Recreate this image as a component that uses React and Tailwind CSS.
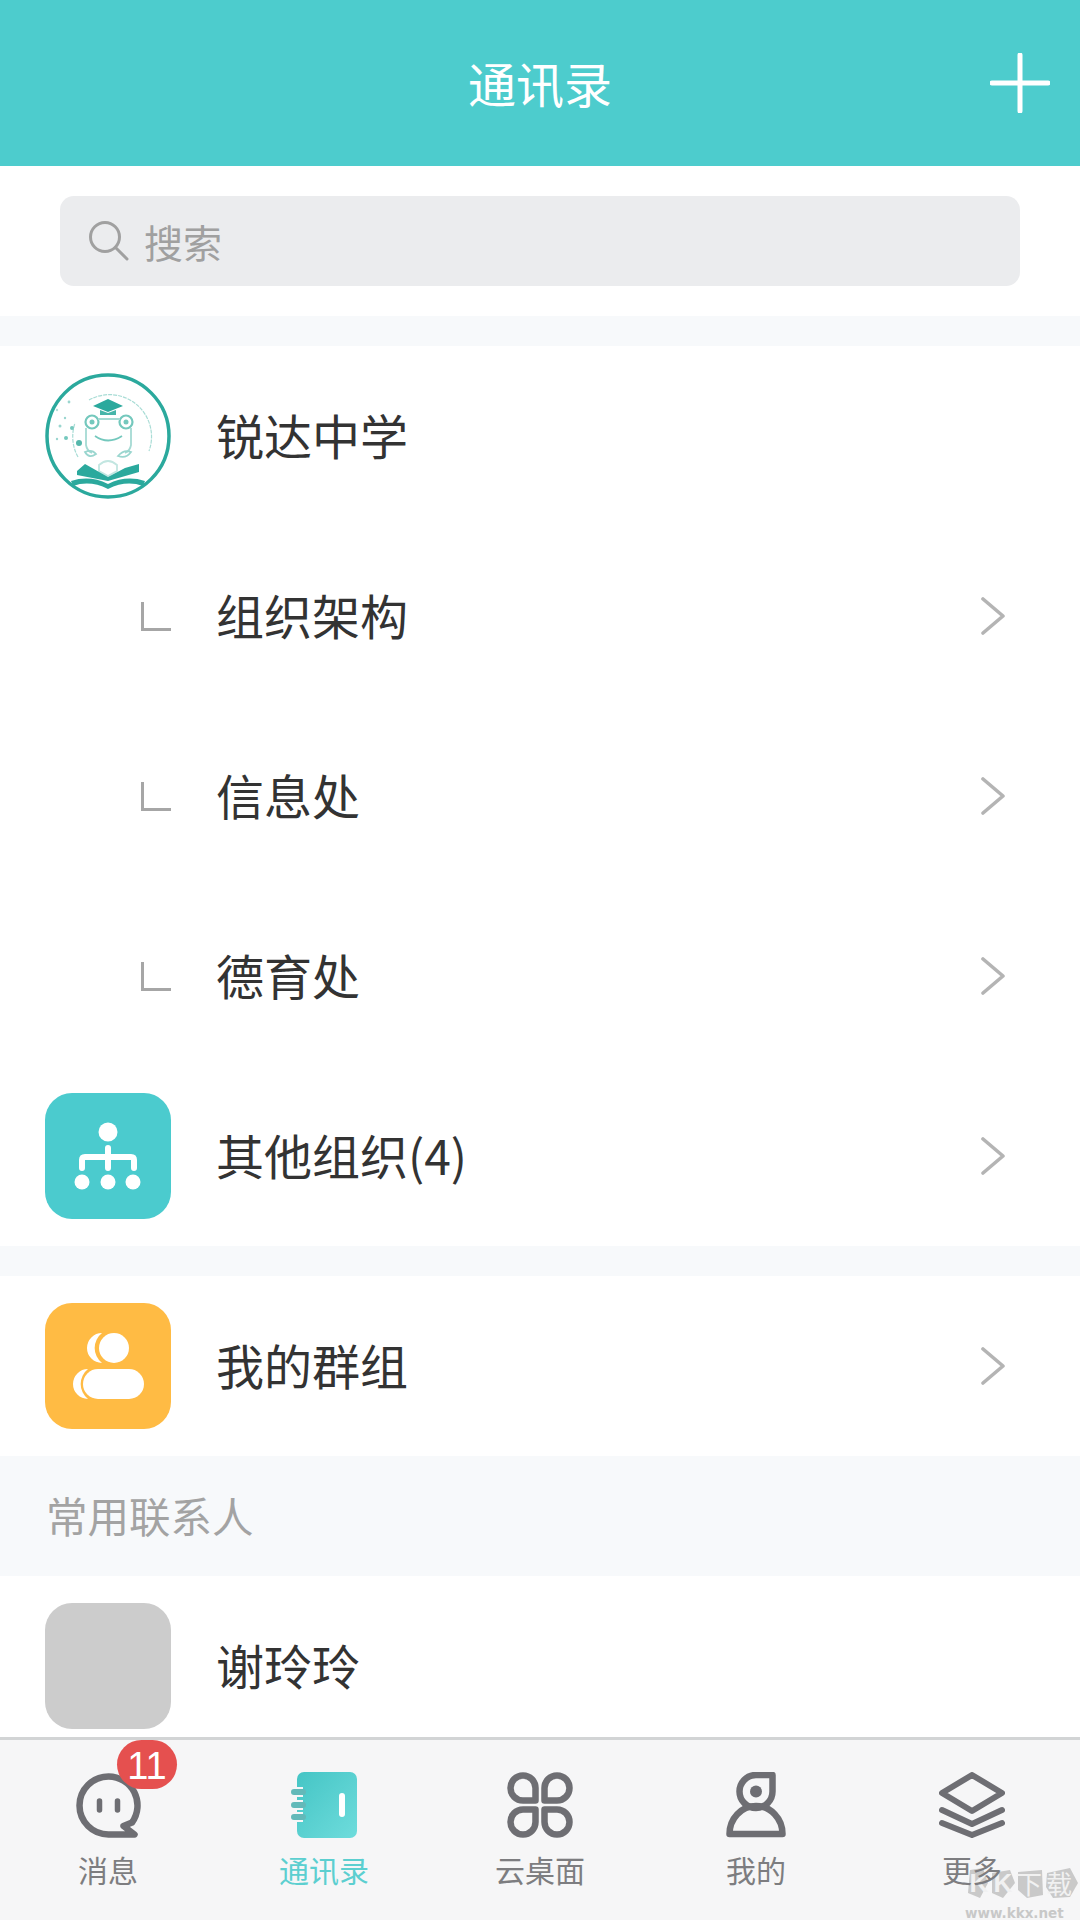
const CJK = 'font-["Noto_Sans_CJK_SC","Noto_Sans",sans-serif]'

const SchoolLogo = () => (
  <svg viewBox="0 0 126 126" className="h-[126px] w-[126px]" fill="none">
    <circle cx="63" cy="63" r="61" stroke="#2ba99d" strokeWidth="3.5" />
    <path d="M33 84A42 42 0 0 1 30 50M44 27A42 42 0 0 1 104 78" stroke="#a8dcd5" strokeWidth="1.2" strokeDasharray="4 1" />
    {/* mortar board */}
    <path d="M48 33L63 26L78 33L63 39Z" fill="#2ba99d" />
    <path d="M55 37V42H71V37L63 40Z" fill="#46b5a9" />
    {/* frog */}
    <circle cx="47" cy="49" r="6.5" stroke="#74c8bd" strokeWidth="2.2" />
    <circle cx="81" cy="49" r="6.5" stroke="#74c8bd" strokeWidth="2.2" />
    <circle cx="47" cy="49" r="2.5" fill="#74c8bd" />
    <circle cx="81" cy="49" r="2.5" fill="#74c8bd" />
    <path d="M53 46H75M41 55V72Q42 78 47 80M86 55V72Q85 78 80 80" stroke="#a5dad3" strokeWidth="1.8" />
    <path d="M50 63Q63 72 77 63" stroke="#74c8bd" strokeWidth="1.8" />
    <path d="M40 79Q47 76 51 81Q44 86 40 79ZM86 79Q79 76 73 83Q81 86 86 79Z" stroke="#9ad6cf" strokeWidth="1.8" />
    <path d="M54 92Q63 84 72 92V98L63 103L54 98Z" stroke="#c2e6e1" strokeWidth="1.8" />
    {/* open book */}
    <path d="M32 98L40 91L63 104L80 95L94 91L94 99L63 108L32 102Z" fill="#2ba99d" />
    <path d="M26 108Q45 102 63 111Q81 102 100 108L98 113Q81 107 63 116Q45 107 28 113Z" fill="#2ba99d" />
    {/* stars */}
    <circle cx="24" cy="29" r="1.4" fill="#9ad6cf" />
    <circle cx="12" cy="37" r="1.2" fill="#b5e0da" />
    <circle cx="20" cy="45" r="1.2" fill="#9ad6cf" />
    <circle cx="15" cy="53" r="1.5" fill="#9ad6cf" />
    <circle cx="27" cy="55" r="2" fill="#74c8bd" />
    <circle cx="12" cy="66" r="1.2" fill="#9ad6cf" />
    <circle cx="21" cy="65" r="2" fill="#74c8bd" />
    <circle cx="34" cy="70" r="3" fill="#55b7ab" />
  </svg>
)

const OrgIcon = () => (
  <div className="flex h-[126px] w-[126px] items-center justify-center rounded-[27px] bg-[#4bcbce]">
    <svg viewBox="0 0 126 126" className="h-[126px] w-[126px]" fill="#fff">
      <circle cx="63" cy="39" r="9.5" />
      <circle cx="37" cy="89" r="7.5" />
      <circle cx="63" cy="89" r="7.5" />
      <circle cx="88" cy="89" r="7.5" />
      <path d="M37 75V67Q37 64 40 64H86Q89 64 89 67V75M63 55V75" fill="none" stroke="#fff" strokeWidth="6" strokeLinecap="round" />
    </svg>
  </div>
)

const GroupIcon = () => (
  <div className="flex h-[126px] w-[126px] items-center justify-center rounded-[27px] bg-[#ffbb44]">
    <svg viewBox="0 0 126 126" className="h-[126px] w-[126px]" fill="#fff">
      <path d="M57 30A15 15 0 0 0 57 60A19 19 0 0 1 57 30Z" />
      <path d="M43 66A15 15 0 0 0 43 96A19 19 0 0 1 43 66Z" />
      <circle cx="69" cy="45" r="15" />
      <rect x="38" y="66" width="61" height="30" rx="15" />
    </svg>
  </div>
)

const TreeCorner = () => (
  <div className="flex w-full justify-end">
    <div className="h-[29px] w-[30px] border-b-[3px] border-l-[3px] border-[#a6a6a6]" />
  </div>
)

const RowArrow = () => (
  <svg viewBox="0 0 26 38" className="h-[38px] w-[26px]" fill="none" stroke="#b4b4b4" strokeWidth="3.6" strokeLinecap="round" strokeLinejoin="round">
    <path d="M3 2L23 19L3 36" />
  </svg>
)

const ContactRow = ({ icon, label, arrow = true }) => (
  <div className="flex h-[180px] shrink-0 items-center pl-[45px] pr-[74px]">
    <div className="flex w-[126px] shrink-0 items-center">{icon}</div>
    <span className="ml-[45px] flex-1 pb-[4px] text-[48px] leading-none text-[#333333]">{label}</span>
    {arrow && <RowArrow />}
  </div>
)

const Band = () => <div className="h-[30px] shrink-0 bg-[#f7f9fb]" />

const ChatGlyph = () => (
  <svg viewBox="0 0 65 65" className="h-[65px] w-[65px]" fill="none">
    <path d="M32.5 3.5A29 29 0 0 1 56 49.5L47.5 53L58.5 61.5H32.5A29 29 0 0 1 32.5 3.5Z" stroke="#6e6e73" strokeWidth="6.5" strokeLinejoin="round" />
    <path d="M23.5 28V37M41.5 28V37" stroke="#6e6e73" strokeWidth="5.5" strokeLinecap="round" />
  </svg>
)

const BookGlyph = () => (
  <svg viewBox="0 0 66 66" className="h-[66px] w-[66px]" fill="none">
    <defs>
      <linearGradient id="bookFill" x1="0" y1="0" x2="1" y2="1">
        <stop offset="0" stopColor="#45c5c5" />
        <stop offset="1" stopColor="#6edcdc" />
      </linearGradient>
    </defs>
    <rect x="6" y="0" width="60" height="66" rx="7" fill="url(#bookFill)" />
    <path d="M0 20H12M0 33H12M0 45H12" stroke="#f6f6f7" strokeWidth="10" />
    <path d="M3 20H12M3 33H12M3 45H12" stroke="#63b9b9" strokeWidth="6" strokeLinecap="round" />
    <rect x="48" y="21" width="6" height="24" rx="3" fill="#fff" />
  </svg>
)

const DeskGlyph = () => (
  <svg viewBox="0 0 66 66" className="h-[66px] w-[66px]" fill="none" stroke="#6e6e73" strokeWidth="6.5" strokeLinejoin="round">
    <path d="M28.5 28.5H16A12.5 12.5 0 1 1 28.5 16Z" />
    <path d="M37.5 28.5H50A12.5 12.5 0 1 0 37.5 16Z" />
    <path d="M28.5 37.5H16A12.5 12.5 0 1 0 28.5 50Z" />
    <path d="M37.5 37.5H50A12.5 12.5 0 1 1 37.5 50Z" />
  </svg>
)

const PersonGlyph = () => (
  <svg viewBox="0 0 60 66" className="h-[66px] w-[60px]" fill="none" stroke="#6e6e73" strokeWidth="6.5" strokeLinejoin="round">
    <path d="M46.5 3H30A16.5 16.5 0 1 0 46.5 19.5Z" />
    <circle cx="30" cy="19.5" r="6" fill="#6e6e73" stroke="none" />
    <path d="M3.5 62A26.5 28 0 0 1 56.5 62Z" />
  </svg>
)

const LayersGlyph = () => (
  <svg viewBox="0 0 66 66" className="h-[66px] w-[66px]" fill="none" stroke="#6e6e73" strokeWidth="6" strokeLinecap="round" strokeLinejoin="round">
    <path d="M33 3L63 21L33 39L3 21Z" />
    <path d="M3 38L33 52L63 38" />
    <path d="M3 51L33 63L63 51" />
  </svg>
)

const tabs = [
  { label: '消息', glyph: <ChatGlyph />, badge: '11' },
  { label: '通讯录', glyph: <BookGlyph />, active: true },
  { label: '云桌面', glyph: <DeskGlyph /> },
  { label: '我的', glyph: <PersonGlyph /> },
  { label: '更多', glyph: <LayersGlyph /> },
]

const TabBar = () => (
  <nav className="grid h-[183px] shrink-0 grid-cols-5 border-t-[3px] border-[#d2d4d5] bg-[#f6f6f7]">
    {tabs.map((tab) => (
      <div key={tab.label} className="relative flex flex-col items-center pt-[32px]">
        <div className="flex h-[66px] items-center justify-center">{tab.glyph}</div>
        <span className={`relative z-10 mt-[11px] text-[30px] leading-[40px] ${tab.active ? 'text-[#5ccfd0]' : 'text-[#7d7d80]'}`}>
          {tab.label}
        </span>
        {tab.badge && (
          <span className="absolute left-[117px] top-0 flex h-[49px] w-[60px] items-center justify-center rounded-full bg-[#e5504f] pt-[3px] font-['Liberation_Sans',sans-serif] text-[38px] leading-none text-white">
            {tab.badge}
          </span>
        )}
      </div>
    ))}
  </nav>
)

// site stamp in the bottom corner, torn paper pieces behind each character
const SiteStamp = () => (
  <div className="pointer-events-none absolute bottom-0 right-0 h-[70px] w-[120px]">
    <svg viewBox="0 0 120 70" className="absolute inset-0 h-[70px] w-[120px]" fill="#c9c9c9">
      <path d="M10 20L23 18L28 33L20 48L8 43Z" />
      <path d="M32 23L50 20L55 33L43 48L32 43Z" />
      <path d="M58 22L82 20L83 45L67 48L58 40Z" />
      <path d="M87 23L110 18L118 33L110 47L93 48L86 37Z" />
    </svg>
    <div className="absolute left-[8px] top-[16px] flex h-[34px] items-center text-[26px] font-bold leading-none text-[#f1f1f1]">
      <span className="w-[22px] text-center font-['Liberation_Sans',sans-serif]">K</span>
      <span className="w-[26px] text-center font-['Liberation_Sans',sans-serif]">K</span>
      <span className="w-[26px] text-center font-normal">下</span>
      <span className="ml-[2px] w-[30px] text-center font-normal">载</span>
    </div>
    <span className="absolute left-[5px] top-[56px] font-['DejaVu_Sans',sans-serif] text-[13.5px] font-bold leading-[14px] text-[#c8c8c8]">
      www.kkx.net
    </span>
  </div>
)

export default function App() {
  return (
    <div className={`relative flex h-[1920px] w-[1080px] flex-col overflow-hidden bg-white ${CJK}`}>
      <header className="relative flex h-[166px] shrink-0 items-center justify-center bg-[#4dcccd]">
        <h1 className="pb-[3px] text-[48px] font-normal leading-none text-white">通讯录</h1>
        <svg viewBox="0 0 60 60" className="absolute right-[30px] top-[53px] h-[60px] w-[60px]" stroke="#fff" strokeWidth="5" strokeLinecap="round">
          <path d="M30 2V58M2 30H58" />
        </svg>
      </header>

      <div className="h-[150px] shrink-0 px-[60px] py-[30px]">
        <div className="flex h-[90px] items-center rounded-[14px] bg-[#ebecee] pl-[29px]">
          <svg viewBox="0 0 40 40" className="h-[40px] w-[40px]" fill="none" stroke="#a0a0a0" strokeWidth="3" strokeLinecap="round">
            <circle cx="16" cy="16" r="14.5" />
            <path d="M26.5 26.5L38 38" />
          </svg>
          <span className="ml-[15px] text-[39px] leading-none text-[#a0a0a0]">搜索</span>
        </div>
      </div>

      <Band />
      <main className="flex min-h-0 flex-1 flex-col overflow-hidden">
        <ContactRow icon={<SchoolLogo />} label="锐达中学" arrow={false} />
        <ContactRow icon={<TreeCorner />} label="组织架构" />
        <ContactRow icon={<TreeCorner />} label="信息处" />
        <ContactRow icon={<TreeCorner />} label="德育处" />
        <ContactRow icon={<OrgIcon />} label="其他组织(4)" />
        <Band />
        <ContactRow icon={<GroupIcon />} label="我的群组" />
        <div className="flex h-[120px] shrink-0 items-center bg-[#f7f9fb] pl-[46px] text-[41.5px] leading-none text-[#a3a3a3]">
          常用联系人
        </div>
        <ContactRow icon={<div className="h-[126px] w-[126px] rounded-[27px] bg-[#cccccc]" />} label="谢玲玲" arrow={false} />
      </main>

      <TabBar />
      <SiteStamp />
    </div>
  )
}
